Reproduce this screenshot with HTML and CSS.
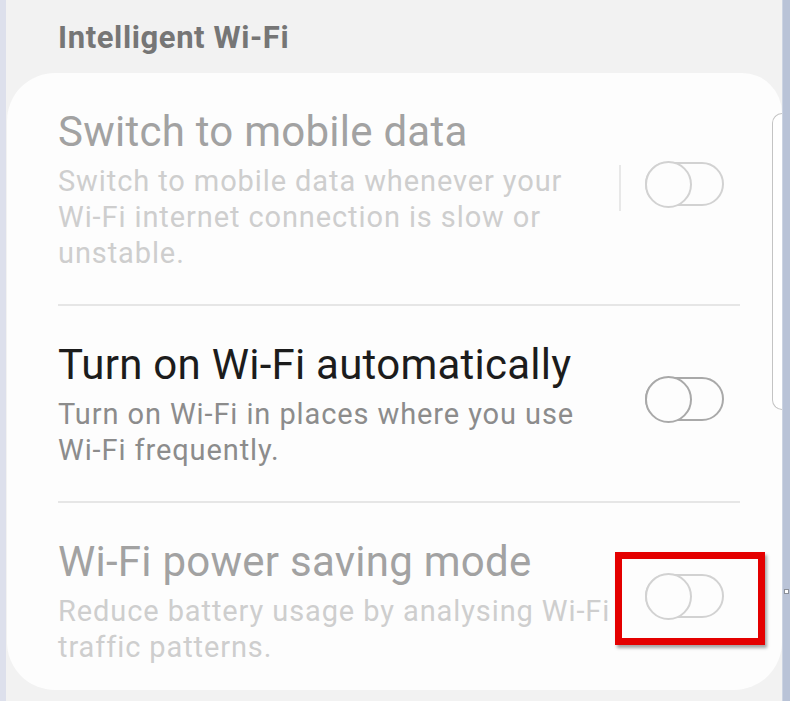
FILE: index.html
```html
<!DOCTYPE html>
<html lang="en">
<head>
  <meta charset="UTF-8">
  <meta name="viewport" content="width=device-width, initial-scale=1.0">
  <title>Intelligent Wi-Fi</title>
  <link rel="stylesheet" href="styles.css">
</head>
<body>

  <!-- left edge of the phone frame -->
  <div class="edge-left"></div>

  <main class="screen">
    <h2 class="group-title">Intelligent Wi-Fi</h2>

    <section class="card">
      <div class="scrollbar"></div>

      <!-- Switch to mobile data (disabled) -->
      <div class="setting disabled">
        <div class="setting-text">
          <div class="setting-name">Switch to mobile data</div>
          <div class="setting-desc">Switch to mobile data whenever your <span class="nb">Wi-Fi</span> internet connection is slow or unstable.</div>
        </div>
        <div class="split"></div>
        <div class="toggle"><span class="thumb"></span></div>
      </div>

      <!-- Turn on Wi-Fi automatically -->
      <div class="setting">
        <div class="setting-text">
          <div class="setting-name">Turn on Wi-Fi automatically</div>
          <div class="setting-desc">Turn on <span class="nb">Wi-Fi</span> in places where you use <span class="nb">Wi-Fi</span> frequently.</div>
        </div>
        <div class="toggle"><span class="thumb"></span></div>
      </div>

      <!-- Wi-Fi power saving mode (disabled, highlighted) -->
      <div class="setting disabled last">
        <div class="setting-text">
          <div class="setting-name">Wi-Fi power saving mode</div>
          <div class="setting-desc">Reduce battery usage by analysing <span class="nb">Wi-Fi</span> traffic patterns.</div>
        </div>
        <div class="toggle">
          <span class="thumb"></span>
          <span class="highlight"></span>
        </div>
      </div>
    </section>
  </main>

  <!-- right edge of the phone frame -->
  <div class="edge-right"><span class="handle"></span></div>

</body>
</html>
```

FILE: styles.css
```css
* {
  margin: 0;
  padding: 0;
  box-sizing: border-box;
}

body {
  font-family: Roboto, "Noto Sans", sans-serif;
  display: flex;
  height: 100vh;
  overflow: hidden;
  background: #f2f2f2;
}

.edge-left {
  width: 6px;
  background: #dde0ec;
}

.edge-right {
  width: 8px;
  background: #b9c3d7;
  border-left: 1px solid #ccd4e2;
  position: relative;
}

.edge-right .handle {
  position: absolute;
  top: 589px;
  left: 1px;
  width: 5px;
  height: 5px;
  border: 1px solid #8a8f99;
  background: #fff;
}

.screen {
  flex: 1;
  display: flex;
  flex-direction: column;
}

.group-title {
  font-size: 31px;
  line-height: 32px;
  font-weight: bold;
  letter-spacing: 0.6px;
  color: #767676;
  padding: 22px 0 0 52px;
  margin-bottom: 19px;
}

.card {
  position: relative;
  margin-left: 1px;
  height: 617px;
  background: #fdfdfd;
  border-radius: 48px 40px 48px 48px;
  padding: 0 42px 0 51px;
}

.scrollbar {
  position: absolute;
  top: 40px;
  right: 0;
  width: 10px;
  height: 297px;
  border: 1.5px solid #c4c4c4;
  border-right: none;
  border-radius: 10px 0 0 10px;
  background: #fff;
}

.setting {
  display: flex;
  align-items: center;
  padding: 35px 0 33px;
  border-bottom: 2px solid #e6e6e6;
}

.setting.last {
  border-bottom: none;
  padding-bottom: 26px;
}

.setting-text {
  width: 560px;
}

.setting-name {
  font-size: 42px;
  line-height: 48px;
  letter-spacing: 0.25px;
  color: #1c1c1c;
  margin-bottom: 7px;
}

.setting-desc {
  font-size: 29px;
  line-height: 36px;
  letter-spacing: 0.9px;
  color: #8c8c8c;
}

.nb {
  white-space: nowrap;
}

.disabled .setting-name {
  color: #a2a2a2;
}

.disabled .setting-desc {
  color: #cecece;
}

.split {
  width: 2px;
  height: 46px;
  background: #e8e8e8;
  margin: 0 24px 4px auto;
}

.toggle {
  position: relative;
  width: 79px;
  height: 44px;
  margin: 0 16px 12px auto;
  border: 2px solid #a9a9a9;
  border-radius: 22px;
}

.split + .toggle {
  margin-left: 0;
}

.toggle .thumb {
  position: absolute;
  left: -2px;
  top: -3px;
  width: 47px;
  height: 47px;
  border: 2px solid #a9a9a9;
  border-radius: 50%;
  background: #fdfdfd;
}

.disabled .toggle,
.disabled .toggle .thumb {
  border-color: #d2d2d2;
}

.toggle .highlight {
  position: absolute;
  left: -32px;
  top: -24px;
  width: 150px;
  height: 93px;
  border: 7px solid #e40000;
  box-shadow: 2px 3px 3px rgba(0, 0, 0, 0.35);
}
```
